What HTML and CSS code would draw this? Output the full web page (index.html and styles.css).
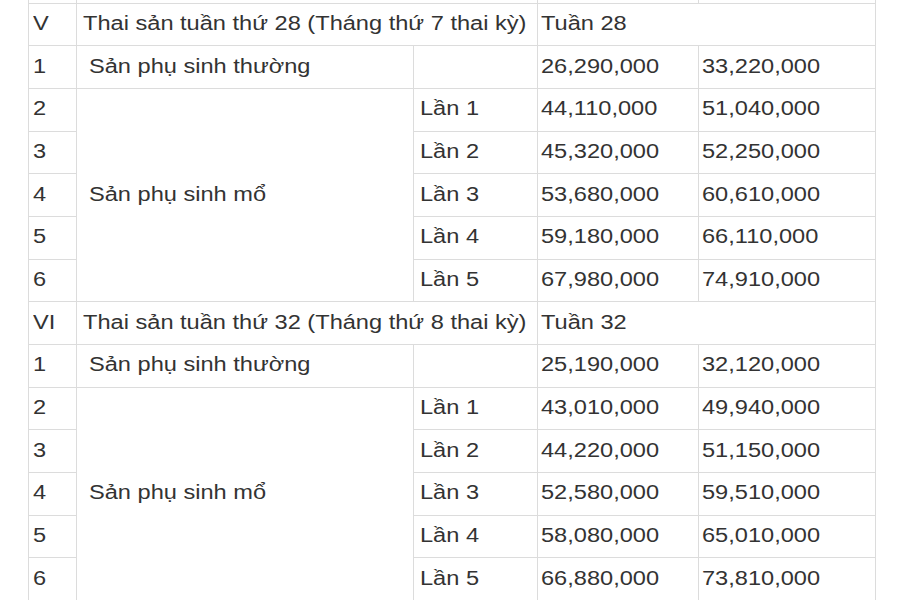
FILE: index.html
```html
<!DOCTYPE html>
<html lang="vi">
<head>
<meta charset="utf-8">
<link rel="stylesheet" href="styles.css">
</head>
<body>
<table class="grid">
  <colgroup>
    <col class="c1"><col class="c2"><col class="c3"><col class="c4"><col class="c5">
  </colgroup>
  <tr class="sliver"><td></td><td class="nb-r"></td><td class="nb-l"></td><td></td><td></td></tr>
  <tr><td class="n"><span class="t">V</span></td><td colspan="2"><span class="t">Thai sản tuần thứ 28 (Tháng thứ 7 thai kỳ)</span></td><td colspan="2" class="v"><span class="t">Tuần 28</span></td></tr>
  <tr><td class="n"><span class="t">1</span></td><td class="ind"><span class="t">Sản phụ sinh thường</span></td><td></td><td class="v"><span class="t">26,290,000</span></td><td class="v"><span class="t">33,220,000</span></td></tr>
  <tr><td class="n"><span class="t">2</span></td><td class="ind" rowspan="5"><span class="t">Sản phụ sinh mổ</span></td><td><span class="t">Lần 1</span></td><td class="v"><span class="t">44,110,000</span></td><td class="v"><span class="t">51,040,000</span></td></tr>
  <tr><td class="n"><span class="t">3</span></td><td><span class="t">Lần 2</span></td><td class="v"><span class="t">45,320,000</span></td><td class="v"><span class="t">52,250,000</span></td></tr>
  <tr><td class="n"><span class="t">4</span></td><td><span class="t">Lần 3</span></td><td class="v"><span class="t">53,680,000</span></td><td class="v"><span class="t">60,610,000</span></td></tr>
  <tr><td class="n"><span class="t">5</span></td><td><span class="t">Lần 4</span></td><td class="v"><span class="t">59,180,000</span></td><td class="v"><span class="t">66,110,000</span></td></tr>
  <tr><td class="n"><span class="t">6</span></td><td><span class="t">Lần 5</span></td><td class="v"><span class="t">67,980,000</span></td><td class="v"><span class="t">74,910,000</span></td></tr>
  <tr><td class="n"><span class="t">VI</span></td><td colspan="2"><span class="t">Thai sản tuần thứ 32 (Tháng thứ 8 thai kỳ)</span></td><td colspan="2" class="v"><span class="t">Tuần 32</span></td></tr>
  <tr><td class="n"><span class="t">1</span></td><td class="ind"><span class="t">Sản phụ sinh thường</span></td><td></td><td class="v"><span class="t">25,190,000</span></td><td class="v"><span class="t">32,120,000</span></td></tr>
  <tr><td class="n"><span class="t">2</span></td><td class="ind" rowspan="5"><span class="t">Sản phụ sinh mổ</span></td><td><span class="t">Lần 1</span></td><td class="v"><span class="t">43,010,000</span></td><td class="v"><span class="t">49,940,000</span></td></tr>
  <tr><td class="n"><span class="t">3</span></td><td><span class="t">Lần 2</span></td><td class="v"><span class="t">44,220,000</span></td><td class="v"><span class="t">51,150,000</span></td></tr>
  <tr><td class="n"><span class="t">4</span></td><td><span class="t">Lần 3</span></td><td class="v"><span class="t">52,580,000</span></td><td class="v"><span class="t">59,510,000</span></td></tr>
  <tr><td class="n"><span class="t">5</span></td><td><span class="t">Lần 4</span></td><td class="v"><span class="t">58,080,000</span></td><td class="v"><span class="t">65,010,000</span></td></tr>
  <tr><td class="n"><span class="t">6</span></td><td><span class="t">Lần 5</span></td><td class="v"><span class="t">66,880,000</span></td><td class="v"><span class="t">73,810,000</span></td></tr>
</table>
</body>
</html>
```

FILE: styles.css
```css
html, body {
  margin: 0;
  padding: 0;
  background: #ffffff;
}
body {
  width: 900px;
  height: 600px;
  overflow: hidden;
  font-family: "Liberation Sans", Arial, sans-serif;
  color: #333333;
}
.grid {
  margin-left: 28px;
  border-collapse: collapse;
  table-layout: fixed;
  width: 847px;
}
.c1 { width: 48px; }
.c2 { width: 337px; }
.c3 { width: 124px; }
.c4 { width: 161px; }
.c5 { width: 177px; }
.grid td {
  border: 1px solid #dcdcdc;
  height: 42.7px;
  padding: 0 0 3px 6px;
  box-sizing: border-box;
  vertical-align: middle;
  font-size: 19.5px;
  line-height: 20px;
  white-space: nowrap;
  overflow: hidden;
}
.grid .sliver td {
  height: 3px;
  padding: 0;
  border-top: none;
}
.grid .sliver .nb-r { border-right: none; }
.grid .sliver .nb-l { border-left: none; }
.grid td.n { padding-left: 4px; }
.grid td.v { padding-left: 3px; }
.grid td.ind { padding-left: 12px; }
.t {
  display: inline-block;
  transform: scaleX(1.21);
  transform-origin: left center;
}
```
